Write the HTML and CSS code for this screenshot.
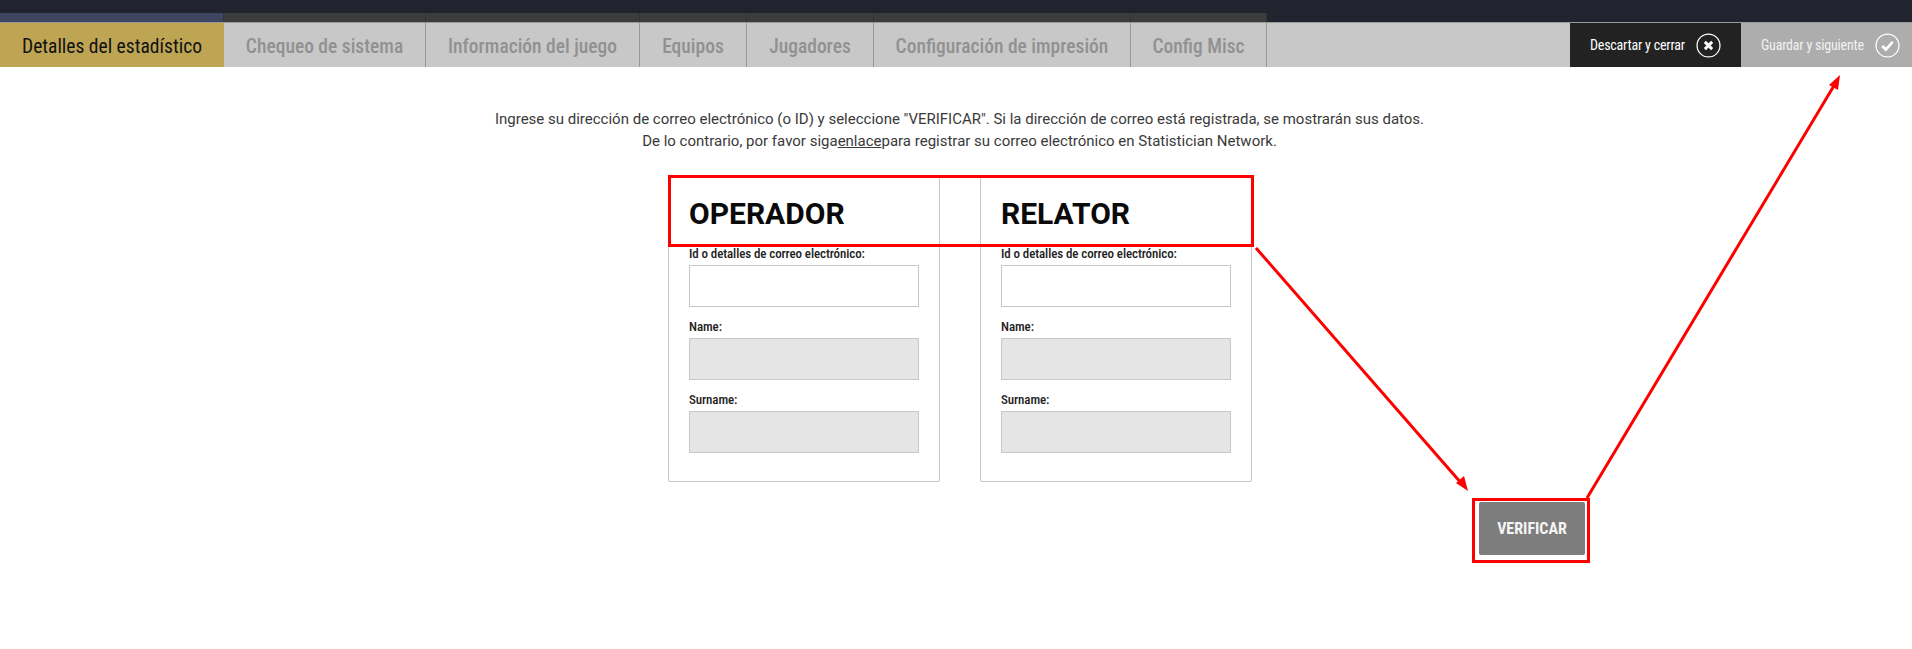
FILE: index.html
```html
<!DOCTYPE html>
<html lang="es">
<head>
    <meta charset="UTF-8">
    <meta name="viewport" content="width=device-width, initial-scale=1.0">
    <title>Detalles del estadístico</title>
    <link rel="stylesheet" href="styles.css">
</head>
<body>
    <div class="top-bar"></div>
    <div class="progress-strip">
        <span class="strip-cell strip-active w1"></span>
        <span class="strip-cell w2"></span>
        <span class="strip-cell w3"></span>
        <span class="strip-cell w4"></span>
        <span class="strip-cell w5"></span>
        <span class="strip-cell w6"></span>
        <span class="strip-cell w7"></span>
    </div>
    <nav class="tabs">
        <a class="tab tab-active w1">Detalles del estadístico</a>
        <a class="tab w2">Chequeo de sistema</a>
        <a class="tab w3">Información del juego</a>
        <a class="tab w4">Equipos</a>
        <a class="tab w5">Jugadores</a>
        <a class="tab w6">Configuración de impresión</a>
        <a class="tab w7">Config Misc</a>
        <div class="tab-actions">
            <button class="action action-dark" type="button">
                <span>Descartar y cerrar</span>
                <svg class="action-icon" viewBox="0 0 24 24">
                    <circle cx="12" cy="12" r="11" fill="none" stroke="#fff" stroke-width="1.2"/>
                    <path d="M8.5 8.5l7 7M15.5 8.5l-7 7" fill="none" stroke="#fff" stroke-width="2.8"/>
                </svg>
            </button>
            <button class="action action-grey" type="button">
                <span>Guardar y siguiente</span>
                <svg class="action-icon" viewBox="0 0 24 24">
                    <circle cx="12" cy="12" r="11" fill="none" stroke="#fff" stroke-width="1.2"/>
                    <path d="M7 12.5l3.4 3.4L17 8.6" fill="none" stroke="#fff" stroke-width="2.6"/>
                </svg>
            </button>
        </div>
    </nav>
    <main class="content">
        <p class="intro">Ingrese su dirección de correo electrónico (o ID) y seleccione "VERIFICAR". Si la dirección de correo está registrada, se mostrarán sus datos.<br>De lo contrario, por favor siga<a class="intro-link">enlace</a>para registrar su correo electrónico en Statistician Network.</p>
        <div class="cards">
            <section class="card">
                <h2>OPERADOR</h2>
                <label>Id o detalles de correo electrónico:</label>
                <input type="text">
                <label>Name:</label>
                <input type="text" disabled>
                <label>Surname:</label>
                <input type="text" disabled>
            </section>
            <section class="card">
                <h2>RELATOR</h2>
                <label>Id o detalles de correo electrónico:</label>
                <input type="text">
                <label>Name:</label>
                <input type="text" disabled>
                <label>Surname:</label>
                <input type="text" disabled>
            </section>
        </div>
        <div class="verify-row">
            <button class="verify" type="button">VERIFICAR</button>
        </div>
    </main>
    <!-- red annotations drawn over the screen -->
    <svg class="notes" width="1912" height="649" viewBox="0 0 1912 649">
        <rect x="669.5" y="176.5" width="583" height="69" fill="none" stroke="#f00" stroke-width="3"/>
        <rect x="1473.5" y="499.5" width="115" height="62" fill="none" stroke="#f00" stroke-width="3"/>
        <path d="M1256 248L1462 484M1587 498L1835 84" fill="none" stroke="#f00" stroke-width="3"/>
        <path d="M1468 491L1456 483L1464 476Z" fill="#f00"/>
        <path d="M1840 75L1838 90L1829 85Z" fill="#f00"/>
    </svg>
</body>
</html>
```

FILE: styles.css
```css
body {
    font-family: Roboto, sans-serif;
    background-color: #fff;
    margin: 0;
    height: 649px;
    overflow: hidden;
    position: relative;
}
.top-bar {
    height: 13px;
    background-color: #21232f;
}
.progress-strip {
    display: flex;
    height: 9px;
    background-color: #21232f;
}
.strip-cell {
    background-color: #3c3c3c;
    border-right: 1px solid #333;
    box-sizing: border-box;
}
.strip-active {
    background-color: #3f4560;
}
.w1 { width: 224px; }
.w2 { width: 202px; }
.w3 { width: 214px; }
.w4 { width: 107px; }
.w5 { width: 127px; }
.w6 { width: 257px; }
.w7 { width: 136px; }
.tabs {
    display: flex;
    height: 45px;
    background-color: #c8c8c8;
    border-top: 1px solid #999;
    box-sizing: border-box;
}
.tab {
    display: flex;
    align-items: center;
    justify-content: center;
    box-sizing: border-box;
    padding-top: 2px;
    font-size: 19.5px;
    font-stretch: 75%;
    font-weight: 500;
    color: #919191;
    border-right: 1px solid #999;
    white-space: nowrap;
}
.tab-active {
    background-color: #bea554;
    color: #111;
    font-weight: 400;
    border-right: none;
}
.tab-actions {
    display: flex;
    margin-left: auto;
}
.action {
    display: flex;
    align-items: center;
    justify-content: space-between;
    box-sizing: border-box;
    height: 100%;
    border: none;
    padding: 0 12px 0 20px;
    color: #fff;
    font-family: Roboto, sans-serif;
    font-size: 14px;
    font-stretch: 75%;
    letter-spacing: -0.2px;
    white-space: nowrap;
}
.action-dark {
    width: 171px;
    background-color: #222;
    padding-right: 20px;
}
.action-grey {
    width: 171px;
    background-color: #adadad;
    color: #f2f2f2;
}
.action-icon {
    flex-shrink: 0;
    width: 25px;
    height: 25px;
}
.intro {
    margin: 0;
    padding: 41px 0 0 7px;
    font-size: 15px;
    font-weight: 400;
    line-height: 22px;
    text-align: center;
    color: #3a3a3a;
}
.intro-link {
    text-decoration: underline;
}
.cards {
    display: flex;
    gap: 40px;
    margin-top: 24px;
    margin-left: 668px;
}
.card {
    width: 272px;
    height: 306px;
    box-sizing: border-box;
    padding: 0 20px;
    border: 1px solid #c6c6c6;
    border-radius: 2px;
    display: flex;
    flex-direction: column;
}
.card h2 {
    margin: 0;
    padding-top: 17px;
    height: 69px;
    box-sizing: border-box;
    font-size: 30px;
    font-weight: 700;
    line-height: 40px;
    color: #0a0a0a;
}
.card label {
    font-size: 13px;
    font-stretch: 75%;
    font-weight: 500;
    letter-spacing: -0.1px;
    line-height: 16px;
    color: #222;
    margin-bottom: 3px;
    white-space: nowrap;
}
.card input {
    height: 42px;
    width: 230px;
    box-sizing: border-box;
    border: 1px solid #c8c8c8;
    background-color: #fff;
    margin-bottom: 12px;
}
.card input:disabled {
    background-color: #e5e5e5;
}
.verify-row {
    display: flex;
    justify-content: flex-end;
    padding-right: 327px;
    margin-top: 20px;
}
.verify {
    width: 106px;
    height: 53px;
    border: none;
    border-radius: 2px;
    background-color: #7d7d7d;
    color: #f5f5f5;
    font-family: Roboto, sans-serif;
    font-size: 16px;
    font-stretch: 75%;
    font-weight: 700;
}
.notes {
    position: absolute;
    top: 0;
    left: 0;
    pointer-events: none;
}
```
